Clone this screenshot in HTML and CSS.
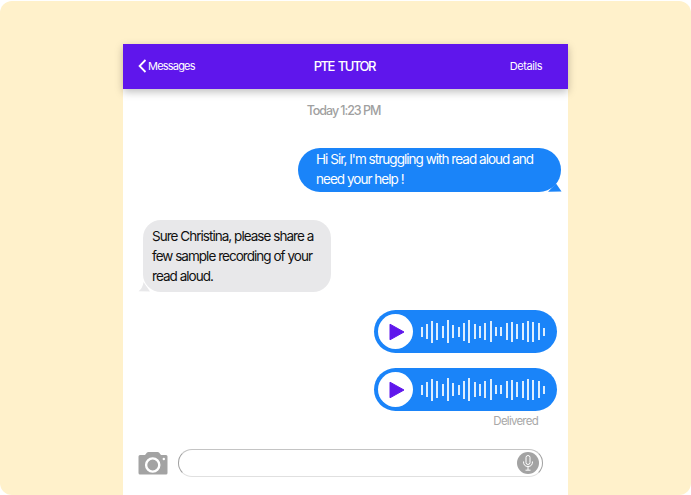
FILE: index.html
```html
<!DOCTYPE html>
<html lang="en">

<head>
    <meta charset="UTF-8">
    <title>PTE Tutor</title>
    <link rel="stylesheet" href="styles.css">
</head>

<body>
    <div class="backdrop">
        <div class="phone">
            <div class="nav_bar">
                <div class="nav_back">
                    <svg class="back_icon" width="9" height="14" viewBox="0 0 9 14"><path d="M7.5 1 L1.6 7 L7.5 13" fill="none" stroke="#fff" stroke-width="1.8"/></svg>
                    <span>Messages</span>
                </div>
                <div class="nav_title">PTE TUTOR</div>
                <div class="nav_details">Details</div>
            </div>

            <div class="thread">
                <div class="timestamp">Today 1:23 PM</div>

                <div class="bubble sent">
                    Hi Sir, I'm struggling with read aloud and<br>need your help !
                    <svg class="tail tail_sent" width="14" height="10" viewBox="0 0 14 10"><path d="M0 9.8 L13.5 9.5 L8 1.5 Z" fill="#1a84f9"/></svg>
                </div>

                <div class="bubble received">
                    Sure Christina, please share a<br>few sample recording of your<br>read aloud.
                    <svg class="tail tail_received" width="12" height="10" viewBox="0 0 12 10"><path d="M0.5 9.2 C3 8 5 4 5.5 0 L12 9.5 Z" fill="#e8e8ea"/></svg>
                </div>

                <div class="voice voice_first">
                    <div class="play_btn"><svg class="play_icon" width="16" height="18" viewBox="0 0 16 18"><path d="M1 1.2 L15 9 L1 16.8 Z" fill="#5f16ec" stroke="#5f16ec" stroke-width="1" stroke-linejoin="round"/></svg></div>
                    <div class="wave">
                        <i style="height:10px"></i><i style="height:15px"></i><i style="height:22px"></i><i style="height:17px"></i><i style="height:12px"></i><i style="height:23px"></i><i style="height:13px"></i><i style="height:10px"></i><i style="height:18px"></i><i style="height:23px"></i><i style="height:15px"></i><i style="height:12px"></i><i style="height:17px"></i><i style="height:21px"></i><i style="height:9px"></i><i style="height:9px"></i><i style="height:17px"></i><i style="height:20px"></i><i style="height:15px"></i><i style="height:17px"></i><i style="height:21px"></i><i style="height:20px"></i><i style="height:17px"></i><i style="height:8px"></i>
                    </div>
                </div>

                <div class="voice">
                    <div class="play_btn"><svg class="play_icon" width="16" height="18" viewBox="0 0 16 18"><path d="M1 1.2 L15 9 L1 16.8 Z" fill="#5f16ec" stroke="#5f16ec" stroke-width="1" stroke-linejoin="round"/></svg></div>
                    <div class="wave">
                        <i style="height:10px"></i><i style="height:15px"></i><i style="height:22px"></i><i style="height:17px"></i><i style="height:12px"></i><i style="height:23px"></i><i style="height:13px"></i><i style="height:10px"></i><i style="height:18px"></i><i style="height:23px"></i><i style="height:15px"></i><i style="height:12px"></i><i style="height:17px"></i><i style="height:21px"></i><i style="height:9px"></i><i style="height:9px"></i><i style="height:17px"></i><i style="height:20px"></i><i style="height:15px"></i><i style="height:17px"></i><i style="height:21px"></i><i style="height:20px"></i><i style="height:17px"></i><i style="height:8px"></i>
                    </div>
                </div>

                <div class="delivered">Delivered</div>
            </div>

            <div class="input_bar">
                <svg class="camera" width="30" height="24" viewBox="0 0 30 24">
                    <path d="M2 4 H7 L9 1.5 Q9.5 1 10.5 1 H19.5 Q20.5 1 21 1.5 L23 4 H28 Q29.5 4 29.5 5.5 V22 Q29.5 23.5 28 23.5 H2 Q0.5 23.5 0.5 22 V5.5 Q0.5 4 2 4 Z" fill="#a3a3a3"/>
                    <circle cx="14.7" cy="14" r="6.6" fill="none" stroke="#fff" stroke-width="2.4"/>
                    <circle cx="25.8" cy="8" r="1.2" fill="#fff"/>
                </svg>
                <div class="input_box">
                    <div class="mic_btn">
                        <svg width="12" height="16" viewBox="0 0 12 16"><rect x="4" y="0.5" width="4" height="9" rx="2" fill="none" stroke="#fff"/><path d="M1.5 6.5 Q1.5 11.5 6 11.5 Q10.5 11.5 10.5 6.5 M6 11.5 V15 M3.5 15.2 H8.5" fill="none" stroke="#fff"/></svg>
                    </div>
                </div>
            </div>
        </div>
    </div>
</body>

</html>
```

FILE: styles.css
```css
html, body {
    margin: 0;
    height: 100%;
    background: #fff;
}

body {
    font-family: "Inter", "Liberation Sans", sans-serif;
    overflow: hidden;
}

.backdrop {
    width: 691px;
    height: 494px;
    margin-top: 1px;
    background: #fff1cb;
    border-radius: 12px;
    padding-top: 43px;
    box-sizing: border-box;
    overflow: hidden;
}

.phone {
    width: 445px;
    height: 451px;
    margin-left: 123px;
    background: #fff;
    display: flex;
    flex-direction: column;
}

.nav_bar {
    height: 45px;
    flex: none;
    background: #5f16ec;
    box-shadow: 0 3px 8px rgba(0, 0, 0, 0.25);
    display: flex;
    align-items: center;
    justify-content: space-between;
    padding: 0 26px 2px 15px;
    box-sizing: border-box;
    color: #fff;
    font-size: 11px;
    letter-spacing: -0.45px;
    position: relative;
}

.nav_back {
    display: flex;
    align-items: center;
    gap: 1px;
    letter-spacing: -0.8px;
}

.nav_title {
    font-size: 13px;
    font-weight: 500;
    letter-spacing: -1.5px;
    word-spacing: 2px;
    margin-left: -16px;
}

.thread {
    flex: 1;
    display: flex;
    flex-direction: column;
    padding: 14px 0 0;
    min-height: 0;
}

.timestamp {
    text-align: center;
    font-size: 12.5px;
    font-weight: 500;
    color: #a0a0a0;
    letter-spacing: -1.05px;
    line-height: 16px;
    margin-left: -4px;
}

.bubble {
    position: relative;
    font-size: 13.5px;
    line-height: 20px;
    letter-spacing: -0.97px;
    box-sizing: border-box;
}

.sent {
    align-self: flex-end;
    width: 263px;
    height: 44px;
    margin: 29px 7px 0 0;
    padding: 1px 0 0 18px;
    background: #1a84f9;
    color: #fff;
    border-radius: 22px;
}

.received {
    align-self: flex-start;
    width: 188px;
    height: 72px;
    margin: 28px 0 0 20px;
    padding: 6px 0 0 9px;
    background: #e8e8ea;
    color: #111;
    border-radius: 18px;
}

.tail {
    position: absolute;
}

.tail_sent {
    right: -1px;
    bottom: 0;
}

.tail_received {
    left: -5px;
    bottom: 0;
}

.voice {
    align-self: flex-end;
    width: 183px;
    height: 43px;
    margin: 15px 11px 0 0;
    background: #1a84f9;
    border-radius: 22px;
    display: flex;
    align-items: center;
    padding-left: 4px;
    box-sizing: border-box;
}

.voice_first {
    margin-top: 18px;
}

.play_btn {
    width: 35px;
    height: 35px;
    border-radius: 50%;
    background: #fff;
    display: flex;
    align-items: center;
    justify-content: center;
    flex: none;
}

.play_icon {
    margin-left: 2px;
}

.wave {
    display: flex;
    align-items: center;
    gap: 3.33px;
    margin-left: 7.5px;
}

.wave i {
    display: block;
    width: 2px;
    background: rgba(255, 255, 255, 0.85);
}

.delivered {
    align-self: flex-end;
    margin: 2px 30px 0 0;
    font-size: 11.5px;
    letter-spacing: -0.75px;
    color: #a8a8a8;
    line-height: 16px;
}

.input_bar {
    flex: none;
    display: flex;
    align-items: center;
    height: 64px;
    padding: 0 25px 0 15px;
    gap: 10px;
}

.input_box {
    flex: 1;
    height: 26px;
    border: 1px solid;
    border-color: #c4c4c4 #a0a0a0 #e0e0e0;
    border-radius: 15px;
    display: flex;
    align-items: center;
    justify-content: flex-end;
    padding-right: 3px;
}

.mic_btn {
    width: 22px;
    height: 22px;
    border-radius: 50%;
    background: #a3a3a3;
    display: flex;
    align-items: center;
    justify-content: center;
}
```
